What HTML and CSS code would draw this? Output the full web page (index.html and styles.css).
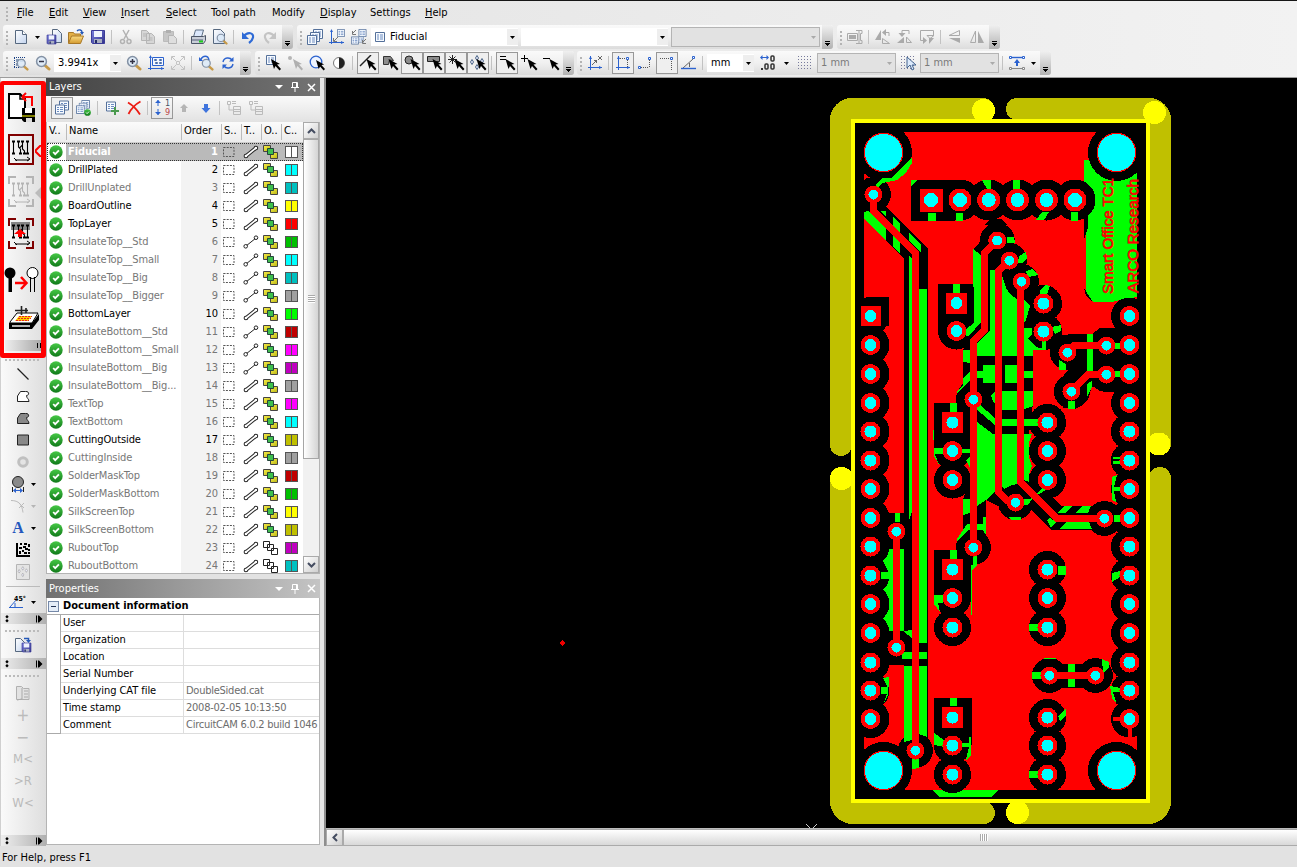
FILE: index.html
```html
<!DOCTYPE html>
<html lang="en">
<head>
<meta charset="utf-8">
<title>CircuitCAM</title>
<link rel="stylesheet" href="styles.css">
</head>
<body>
<svg class="defs" width="0" height="0">
  <defs>
    <linearGradient id="gPage" x1="0" y1="0" x2="1" y2="1"><stop offset="0" stop-color="#fff"/><stop offset="1" stop-color="#c3d4ee"/></linearGradient>
    <linearGradient id="gGreen" x1="0" y1="0" x2="0" y2="1"><stop offset="0" stop-color="#45c845"/><stop offset="1" stop-color="#117a1a"/></linearGradient>
    <linearGradient id="gYel" x1="0" y1="0" x2="1" y2="1"><stop offset="0" stop-color="#fbf14a"/><stop offset="1" stop-color="#b8b414"/></linearGradient>
    <linearGradient id="gFold" x1="0" y1="0" x2="0" y2="1"><stop offset="0" stop-color="#fbdc84"/><stop offset="1" stop-color="#d39a2e"/></linearGradient>
    <linearGradient id="gFlop" x1="0" y1="0" x2="1" y2="1"><stop offset="0" stop-color="#7a80e0"/><stop offset="1" stop-color="#30308a"/></linearGradient>
  </defs>
  <symbol id="arrow" viewBox="0 0 5 3"><path d="M0 0h5L2.5 3z" fill="currentColor"/></symbol>
  <symbol id="new" viewBox="0 0 16 16"><path d="M2.5 1.5h7l4 4v9h-11z" fill="url(#gPage)" stroke="#56687f"/><path d="M9.5 1.5v4h4" fill="#fff" stroke="#56687f"/></symbol>
  <symbol id="flop" viewBox="0 0 16 16"><path d="M1.5 1.5h13v13h-12l-1-1z" fill="url(#gFlop)" stroke="#3a3a96"/><path d="M4 2h8v6H4z" fill="#eef2fc"/><path d="M4 10h8v4H4z" fill="#a9afc0"/><path d="M5 11h2v3H5z" fill="#222a66"/></symbol>
  <symbol id="savecopy" viewBox="0 0 16 16"><path d="M6.500 .5h5l4 4v9h-9z" fill="url(#gPage)" stroke="#56687f"/><svg x="0" y="5" width="11" height="11"><use href="#flop" width="11" height="11"/></svg></symbol>
  <symbol id="export" viewBox="0 0 18 18"><path d="M1.500 2.500h5l4 4v9h-9z" fill="url(#gPage)" stroke="#56687f"/><svg x="7" y="6" width="11" height="11"><use href="#flop" width="11" height="11"/></svg><path d="M10 2.500h4.500V5" fill="none" stroke="#2458b8" stroke-width="1.500"/><path d="M12 4h5l-2.500 3z" fill="#2458b8"/></symbol>
  <symbol id="open" viewBox="0 0 16 16"><path d="M.5 14V3.500h5l1 1.500h6v3" fill="#e3b048" stroke="#a87828"/><path d="M.5 14.500l3-7.500h12l-3 7.500z" fill="url(#gFold)" stroke="#a87828"/><path d="M9 2c2-2 5-1 5 1" fill="none" stroke="#2458b8" stroke-width="1.400"/><path d="M12 3h4l-2 3z" fill="#2458b8"/></symbol>
  <symbol id="cut" viewBox="0 0 16 16"><path d="M5 1l5 9M11 1L6 10" stroke="#b2b2b2" stroke-width="1.500"/><circle cx="4.500" cy="12.500" r="2" fill="none" stroke="#b2b2b2" stroke-width="1.500"/><circle cx="11" cy="12.500" r="2" fill="none" stroke="#b2b2b2" stroke-width="1.500"/></symbol>
  <symbol id="copy" viewBox="0 0 16 16"><path d="M1.500 1.500h5l3 3v7h-8zM6.500 4.500h5l3 3v7h-8z" fill="#d6d6d6" stroke="#b5b5b5"/><path d="M3 5h3M3 7h3M8.500 9h4M8.500 11h4" stroke="#b5b5b5"/></symbol>
  <symbol id="paste" viewBox="0 0 16 16"><path d="M1.500 2.500h10v10h-10z" fill="#c6c6c6" stroke="#bbb"/><path d="M4 1h5v3H4z" fill="#afafaf"/><path d="M6.500 6.500h5l3 3v5h-8z" fill="#dedede" stroke="#b5b5b5"/></symbol>
  <symbol id="print" viewBox="0 0 16 16"><path d="M5.500 1h8l-2 7h-8z" fill="#dce8fc" stroke="#5f7086"/><path d="M1.500 7.500h12l2-1v5l-2 3h-12z" fill="#c9ced8" stroke="#4d5668"/><path d="M2 11h11" stroke="#56607a"/><path d="M9 11.500h4v2H9z" fill="#1bd11b"/></symbol>
  <symbol id="lens" viewBox="0 0 16 16"><path d="M9.500 10l4.500 4" stroke="#c79a48" stroke-width="3" stroke-linecap="round"/><circle cx="6.500" cy="6.500" r="4.900" fill="#dceaf8" fill-opacity=".85" stroke="#8391a4" stroke-width="1.500"/></symbol>
  <symbol id="preview" viewBox="0 0 16 16"><path d="M1.500 .5h7l4 4v10h-11z" fill="url(#gPage)" stroke="#56687f"/><svg x="4" y="4" width="12" height="12"><use href="#lens" width="12" height="12"/></svg></symbol>
  <symbol id="undo" viewBox="0 0 16 16"><path d="M3.500 7.500C8 2 14 4 13 8.500 12.500 11 11 12.500 9 14" fill="none" stroke="currentColor" stroke-width="2.200"/><path d="M2 3v7h7z" fill="currentColor"/></symbol>
  <symbol id="zsel" viewBox="0 0 16 16"><path d="M1 2.500h12M1 12.500h6M1.500 3v10" stroke="#183f85" stroke-dasharray="1 1"/><path d="M3 4h3v3H3zM7 4h4v3H7zM3 8h3v3H3z" fill="#8299b8"/><svg x="3" y="3" width="13" height="13"><use href="#lens" width="13" height="13"/></svg></symbol>
  <symbol id="zout" viewBox="0 0 16 16"><use href="#lens"/><path d="M4 6.500h5" stroke="#334" stroke-width="1.500"/></symbol>
  <symbol id="zin" viewBox="0 0 16 16"><use href="#lens"/><path d="M4 6.500h5M6.500 4v5" stroke="#334" stroke-width="1.500"/></symbol>
  <symbol id="zfit" viewBox="0 0 16 16"><path d="M2.500 1v14M0 13.500h16" stroke="#2b62cf"/><path d="M1 3l1.500-3L4 3zM13 12l3 1.500-3 1.500z" fill="#2b62cf"/><path d="M4.500 2.500h11v8h-11z" fill="#f4f8ff" stroke="#2b62cf"/><path d="M6.500 4.500h2v1h-2zM11.500 4.500h2v1h-2zM7.500 7.500h2v1h-2zM11.500 7.500h2v1h-2z" fill="none" stroke="#4a6eaa"/></symbol>
  <symbol id="zall" viewBox="0 0 16 16"><path d="M1.500 5v-3.500H5M11 1.500h3.500V5M14.500 11v3.500H11M5 14.500H1.500V11M2 2l4 4M14 2l-4 4M14 14l-4-4M2 14l4-4" fill="none" stroke="#c2c2c2"/><path d="M6.500 6.500h3v3h-3z" fill="none" stroke="#c4c4c4"/></symbol>
  <symbol id="zprev" viewBox="0 0 16 16"><svg x="3" y="3" width="13" height="13"><use href="#lens" width="13" height="13"/></svg><path d="M2.500 5C5 0 10 0 11 5" fill="none" stroke="#2b62cf" stroke-width="1.400"/><path d="M1 2v4h4z" fill="#2b62cf"/></symbol>
  <symbol id="refresh" viewBox="0 0 16 16"><path d="M3 7c1-5 7-5 9-2M13 9c-1 5-7 5-9 2" fill="none" stroke="#2b62cf" stroke-width="1.400"/><path d="M13.500 2v4.500H9zM2.500 14V9.500H7z" fill="#2b62cf"/></symbol>
  <symbol id="grid" viewBox="0 0 10 10"><path d="M.5 .5h9v9h-9z" fill="#f6faff" stroke="#54709a"/><path d="M2 3h2M5 3h3M2 5h2M5 5h3M2 7h2M5 7h3" stroke="#6c8cc0"/></symbol>
  <symbol id="layers" viewBox="0 0 16 16"><use href="#grid" x="6" y="0" width="10" height="10"/><use href="#grid" x="3" y="3" width="10" height="10"/><use href="#grid" x="0" y="6" width="10" height="10"/></symbol>
  <symbol id="lay2" viewBox="0 0 16 16"><path d="M2.500 1v14M0 13.500h15" stroke="#2b62cf"/><path d="M1 3l1.500-3L4 3zM12 12l3 1.500-3 1.500z" fill="#2b62cf"/><use href="#grid" x="8" y="0" width="8" height="8"/><path d="M9 8l-4 4M4.500 9v3.500H8" stroke="#777" fill="none"/></symbol>
  <symbol id="lay3" viewBox="0 0 16 16"><use href="#grid" x="7" y="0" width="9" height="8"/><use href="#grid" x="0" y="7" width="8" height="9"/><use href="#grid" x="7" y="7" width="6" height="7"/><path d="M5 1L1 5M1.500 2v3.500H5M15 10l-4 4M11.500 11v3.500H15" stroke="#777" fill="none"/></symbol>
  <symbol id="cursor" viewBox="0 0 10 12"><path d="M0 0l9 5-3 .5L10 10 8.500 11.500 4.500 7 3 10z" fill="currentColor"/></symbol>
  <symbol id="sgrid" viewBox="0 0 16 16"><use href="#grid" x="1" y="0" width="10" height="10"/><use href="#cursor" x="6" y="4" width="10" height="12"/></symbol>
  <symbol id="spt" viewBox="0 0 16 16"><circle cx="3" cy="3" r="2" fill="#b5b5b5"/><use href="#cursor" x="6" y="4" width="10" height="12"/></symbol>
  <symbol id="scirc" viewBox="0 0 16 16"><circle cx="7" cy="7" r="5.800" fill="#eef4ff" stroke="#2b62cf" stroke-width="1.300"/><use href="#cursor" x="7" y="5" width="9" height="11"/></symbol>
  <symbol id="contrast" viewBox="0 0 16 16"><circle cx="8" cy="8" r="5.500" fill="#fff" stroke="#777"/><path d="M8 2.500a5.500 5.500 0 0 1 0 11z" fill="#222"/></symbol>
  <symbol id="sline" viewBox="0 0 18 16"><path d="M1 11L12 0" stroke="#222" stroke-width="1.400"/><use href="#cursor" x="7" y="4" width="11" height="12"/></symbol>
  <symbol id="spoly" viewBox="0 0 18 16"><path d="M2.500 9.500v-8h7l3 4-4-.5-1 4.500z" fill="#8c8c8c" stroke="#333"/><use href="#cursor" x="7" y="4" width="11" height="12"/></symbol>
  <symbol id="sdot" viewBox="0 0 18 16"><circle cx="6" cy="5" r="4" fill="#8c8c8c" stroke="#222"/><use href="#cursor" x="7" y="4" width="11" height="12"/></symbol>
  <symbol id="srect" viewBox="0 0 18 16"><path d="M2.500 1.500h12v5h-12z" fill="#8c8c8c" stroke="#222"/><use href="#cursor" x="7" y="4" width="11" height="12"/></symbol>
  <symbol id="sstar" viewBox="0 0 18 16"><path d="M5.500 0v9M1 4.500h9M2.500 1.500l6 6M8.500 1.500l-6 6" stroke="#222"/><use href="#cursor" x="7" y="4" width="11" height="12"/></symbol>
  <symbol id="diam" viewBox="0 0 18 16"><path d="M8 .5L9.500 3 8 5.500 6.500 3zM3 4.500L4.500 7 3 9.500 1.500 7zM8 9.500l1.500 2.500L8 14.500 6.500 12zM13 3.500L14.500 6 13 8.500 11.500 6z" fill="#eef" stroke="currentColor"/></symbol>
  <symbol id="sdiam" viewBox="0 0 18 16"><use href="#diam" color="#4a6486"/><use href="#cursor" x="7" y="4" width="11" height="12"/></symbol>
  <symbol id="seq" viewBox="0 0 18 16"><path d="M2 1.500h6M2 4.500h6" stroke="#000"/><use href="#cursor" x="7" y="4" width="11" height="12"/></symbol>
  <symbol id="splus" viewBox="0 0 18 16"><path d="M1 3.500h7M4.500 0v7" stroke="#000"/><use href="#cursor" x="7" y="4" width="11" height="12"/></symbol>
  <symbol id="sminus" viewBox="0 0 18 16"><path d="M1 3.500h7" stroke="#000"/><use href="#cursor" x="7" y="4" width="11" height="12"/></symbol>
  <symbol id="axes" viewBox="0 0 16 16"><path d="M3.500 1v14M1 12.500h14" stroke="#2b62cf"/><path d="M2 4l1.500-3L5 4zM12 11l3 1.500-3 1.500z" fill="#2b62cf"/></symbol>
  <symbol id="ax1" viewBox="0 0 16 16"><use href="#axes"/><path d="M5 10l5-5M7 5.500h2.500V8M11 1l4 4M15 1l-4 4" stroke="#666" fill="none"/></symbol>
  <symbol id="ax2" viewBox="0 0 16 16"><use href="#axes"/><path d="M5 3.500h7M12.500 5v7" stroke="#555" stroke-dasharray="1 1"/><path d="M11.500 2.500h2v2h-2z" fill="#fff" stroke="#2b62cf"/></symbol>
  <symbol id="ax3" viewBox="0 0 16 16"><path d="M4 12.500h8M12.500 5v7" stroke="#555" stroke-dasharray="1 1"/><path d="M1.500 11.500h2v2h-2zM11.500 2.500h2v2h-2z" fill="#fff" stroke="#2b62cf"/></symbol>
  <symbol id="ax4" viewBox="0 0 16 16"><path d="M1 3.500h10M12.500 6v9" stroke="#555" stroke-dasharray="1 1"/><path d="M11.500 2.500h2v2h-2z" fill="#fff" stroke="#2b62cf"/></symbol>
  <symbol id="ax5" viewBox="0 0 16 16"><path d="M2 13L12 4M8.500 8v4" stroke="#666"/><path d="M0 13.500h15" stroke="#2b62cf" stroke-width="1.400"/><path d="M11.500 1.500h2v2h-2z" fill="#fff" stroke="#2b62cf"/></symbol>
  <symbol id="prec" viewBox="0 0 16 16"><path d="M1 2.500h7" stroke="#2b62cf"/><path d="M0 2.500L2.500 0v5zM9 2.500L6.500 0v5z" fill="#2b62cf"/><rect x="11" y="1" width="3" height="5" rx="1" fill="none" stroke="#333" stroke-width="1.500"/><rect x="5" y="9" width="3" height="5" rx="1" fill="none" stroke="#333" stroke-width="1.500"/><rect x="11" y="9" width="3" height="5" rx="1" fill="none" stroke="#333" stroke-width="1.500"/><path d="M1 13h2v2H1z" fill="#333"/></symbol>
  <symbol id="dots" viewBox="0 0 16 16"><path d="M1 1.500h14M1 4.500h14M1 7.500h14M1 10.500h14M1 13.500h14" stroke="#777a9b" stroke-dasharray="1 2"/></symbol>
  <symbol id="dotc" viewBox="0 0 16 16"><use href="#dots"/><path d="M7 2v11l3-3 2 5 2-1-2-4h4z" fill="#dceafc" stroke="#45658f"/></symbol>
  <symbol id="dist" viewBox="0 0 16 16"><path d="M3 2.500h10" stroke="#2b62cf" stroke-width="1.400"/><path d="M.5 1.500h2v2h-2zM13.500 1.500h2v2h-2z" fill="#fff" stroke="#2b62cf"/><path d="M8 4l3 4H9v3H7V8H5z" fill="#2b62cf"/><path d="M3 13.500h10" stroke="#888"/><path d="M.5 12.500h2v2h-2zM13.500 12.500h2v2h-2z" fill="#fff" stroke="#888"/></symbol>
  <symbol id="mir1" viewBox="0 0 18 16"><path d="M1.500 4.500h10v7h-10z" fill="none" stroke="#aaa"/><path d="M3 6h7v4H3z" fill="#aaa"/><path d="M10 1.500h6v3h-1.500v7H16v3h-6M13 1v14" fill="none" stroke="#aaa"/></symbol>
  <symbol id="mir2" viewBox="0 0 16 16"><path d="M6 1v10H0z" fill="#aaa"/><path d="M7.500 9.500l7 5h-7zM14 7V3.500H9" fill="none" stroke="#aaa"/><path d="M11 0v7L7 3.500z" fill="#aaa"/></symbol>
  <symbol id="mir3" viewBox="0 0 16 16"><path d="M0 14h7V8z" fill="#aaa"/><path d="M9.500 8v5.500h5zM12 5V1.500H5V5" fill="none" stroke="#aaa"/><path d="M1.500 4h7L5 8z" fill="#aaa"/></symbol>
  <symbol id="mir4" viewBox="0 0 16 16"><path d="M14.500 6V1.500h-13v10H5" fill="none" stroke="#aaa"/><path d="M4 8v7l4-3.500zM10 15V9h5z" fill="#aaa"/><path d="M8 6.500h7l-4 3z" fill="none" stroke="#aaa"/></symbol>
  <symbol id="mir5" viewBox="0 0 16 16"><path d="M2 6.500L12.500 1.500v5z" fill="none" stroke="#aaa"/><path d="M2 9h11v5z" fill="#aaa"/></symbol>
  <symbol id="mir6" viewBox="0 0 16 16"><path d="M6.500 2v11.500h-5z" fill="none" stroke="#aaa"/><path d="M9 2v12h6z" fill="#aaa"/></symbol>
  <symbol id="lp1" viewBox="0 0 16 16"><use href="#grid" x="5" y="0" width="10" height="11"/><use href="#grid" x="1" y="4" width="10" height="11"/></symbol>
  <symbol id="tick" viewBox="0 0 14 14"><circle cx="7" cy="7" r="6.700" fill="url(#gGreen)"/><path d="M4.200 7l2 2.200L9.900 5.300" stroke="#fff" stroke-width="1.800" fill="none"/></symbol>
  <symbol id="lp2" viewBox="0 0 16 16"><use href="#layers" width="14" height="14"/><use href="#tick" x="8" y="9" width="7" height="7"/></symbol>
  <symbol id="lp3" viewBox="0 0 16 16"><use href="#grid" x="2" y="1" width="10" height="11"/><path d="M7 11h8M11 7v8" stroke="#4a9a4e" stroke-width="2"/></symbol>
  <symbol id="del" viewBox="0 0 16 16"><path d="M2 2.500c5 3 9 7 12 12M14.500 1.500C8 5 5 9 2.500 14" stroke="#ec1c14" stroke-width="1.800" fill="none"/></symbol>
  <symbol id="up" viewBox="0 0 16 16"><path d="M8 4l4 4H10v4H6V8H4z" fill="currentColor"/></symbol>
  <symbol id="down" viewBox="0 0 16 16"><path d="M8 13l4.500-5H10V4H6v4H3.500z" fill="#3f74dd"/></symbol>
  <symbol id="tree" viewBox="0 0 16 16"><path d="M1.500 1.500h3v3h-3zM6 1.500h4M6 3.500h4M3 5v5h4M7.500 6.500h7v8h-7zM8 9.500h6M8 11.500h6" fill="none" stroke="#bbb"/></symbol>
  <symbol id="dash" viewBox="0 0 12 10"><path d="M.5 .5h10.500v9H.5z" fill="none" stroke="#555" stroke-dasharray="2 1.200"/></symbol>
  <symbol id="bone1" viewBox="0 0 16 14"><path d="M3 11L13 3" stroke="#222"/><circle cx="2.700" cy="11.300" r="1.800" fill="#fff" stroke="#222"/><circle cx="13" cy="2.700" r="1.800" fill="#fff" stroke="#222"/></symbol>
  <symbol id="bone2" viewBox="0 0 16 14"><circle cx="2.900" cy="11" r="2.300" fill="#222"/><circle cx="12.900" cy="3" r="2.300" fill="#222"/><path d="M3 11L13 3" stroke="#222" stroke-width="3.600"/><path d="M3 11L13 3" stroke="#fff" stroke-width="1.700"/><circle cx="2.900" cy="11" r="1.300" fill="#fff"/><circle cx="12.900" cy="3" r="1.300" fill="#fff"/></symbol>
  <symbol id="lay" viewBox="0 0 15 14"><path d="M.5 .5h7v6h-7z" fill="url(#gYel)" stroke="#444"/><path d="M7.500 7.500h7v6h-7z" fill="url(#gYel)" stroke="#444"/><path d="M4.500 3.500h6v6h-6z" fill="#3ec04d" stroke="#24443a"/></symbol>
  <symbol id="layo" viewBox="0 0 15 14"><path d="M.5 .5h6v6h-6zM8.500 7.500h6v6h-6zM4.500 3.500h6v6h-6z" fill="#fff" fill-opacity=".6" stroke="#222"/></symbol>
  <symbol id="pin" viewBox="0 0 8 10"><path d="M1.500 .5h5v5h-5zM5.500 .5v5M0 5.500h8M4 6v4" fill="none" stroke="#fff"/></symbol>
  <symbol id="x" viewBox="0 0 9 9"><path d="M1 1l7 7M8 1L1 8" stroke="#fff" stroke-width="1.500"/></symbol>

  <symbol id="bnew" viewBox="0 0 30 32"><path d="M2 2h11l5 5v19H2z" fill="#fff" stroke="#000" stroke-width="2"/><path d="M13 2v5h5" fill="none" stroke="#000" stroke-width="1.500"/><path d="M15 5h10v9M15 5l4-4M15 5l4 4" fill="none" stroke="#f00" stroke-width="2"/><path d="M15 16h13v14H17l-2-2z" fill="#000"/><path d="M18 16h7v5h-7z" fill="#fff"/><path d="M15 23h13v2H15z" fill="#808000"/><path d="M19 26h6v4h-6z" fill="#ddd"/></symbol>
  <symbol id="tracks" viewBox="0 0 26 31"><path d="M5.500 7v13M10.500 7v6l2 2v5M14.500 7v4l-3 3M14.500 11v4l2 2v3M19.500 7v13M7 26h14" fill="none" stroke="currentColor" stroke-width="1.100"/><path d="M4 7.500h3M9 7.500h3M13 7.500h3M18 7.500h3M4 19.500h3M11 19.500h3M15 19.500h3M18 19.500h3" stroke="currentColor" stroke-width="2"/><path d="M6 24l3 3M19 23l3 2-3 2" stroke="currentColor" fill="none"/></symbol>
  <symbol id="b2" viewBox="0 0 26 31"><path d="M1 1h24v29H1z" fill="none" stroke="#800000" stroke-width="2"/><use href="#tracks"/></symbol>
  <symbol id="b3" viewBox="0 0 26 31"><path d="M1 8V1h7M18 1h7v7M25 23v7h-7M8 30H1v-7" fill="none" stroke="#b4b4b4" stroke-width="2"/><use href="#tracks" color="#b4b4b4"/></symbol>
  <symbol id="b4" viewBox="0 0 26 31"><path d="M3 4h19v8H3z" fill="#858585"/><path d="M1 8V1h7M18 1h7v7M25 23v7h-7M8 30H1v-7" fill="none" stroke="#800000" stroke-width="2"/><use href="#tracks"/><path d="M12 11l6 5h-4v3h-4v-3H6z" fill="#f00"/></symbol>
  <symbol id="b5" viewBox="0 0 36 30"><circle cx="6" cy="7" r="5.500"/><path d="M4.500 10h3.500v16H4.500z"/><circle cx="28.500" cy="7" r="5.500" fill="#fff" stroke="#000"/><path d="M26.500 11v15M30.500 11v15" stroke="#000"/><path d="M11 17h10M17 11l5.500 6-5.500 6" stroke="#f00" stroke-width="2.500" fill="none"/></symbol>
  <symbol id="b6" viewBox="0 0 32 26"><path d="M2 17l7-9h21l-6 10H2z" fill="#fff" stroke="#000"/><path d="M11 11h13l-4 5H7z" fill="#fc0"/><path d="M11 11.500h13M10 13.500h13M8 15.500h13" stroke="#e22" stroke-dasharray="2 1"/><path d="M1 18h23l7-9v6l-7 9H1z"/><path d="M4 21h18" stroke="#eee" stroke-width="1.500"/><path d="M7 5.500h13M13.500 1v9M18 3v5" stroke="#222" stroke-width="1.600"/></symbol>
  <symbol id="v1" viewBox="0 0 16 16"><path d="M2.500 2.500l11 11" stroke="#222" stroke-width="1.300"/></symbol>
  <symbol id="v2" viewBox="0 0 16 16"><path d="M2.500 13.500V8l3-4.500h5c4-.5 4 4 1 4 0 3 2.500 3 2.500 6z" fill="currentColor" stroke="#222"/></symbol>
  <symbol id="v4" viewBox="0 0 16 16"><path d="M2.500 3h11v10h-11z" fill="#888" stroke="#222"/></symbol>
  <symbol id="v5" viewBox="0 0 16 16"><circle cx="8" cy="8" r="4.300" fill="#e4e4e4" stroke="#c0c0c0" stroke-width="3"/></symbol>
  <symbol id="v6" viewBox="0 0 16 18"><circle cx="8" cy="7" r="5.500" fill="#8a8a8a" stroke="#222"/><path d="M2.500 12v5M13.500 12v5" stroke="#222"/><path d="M4 15.500h8" stroke="#2b62cf"/><path d="M6 13v5l-3-2.500zM10 13v5l3-2.500z" fill="#2b62cf"/></symbol>
  <symbol id="v7" viewBox="0 0 16 16"><path d="M1 2.500c8 0 11 4 12 12M9 5l5 5M14 5L9 10" fill="none" stroke="#bbb"/></symbol>
  <symbol id="v9" viewBox="0 0 14 14"><path d="M0 0h2v12h12v2H0zM4 0h2v2H4zM8 0h3v2H8zM12 1h2v3h-2zM3 4h3v2H3zM7 3h3v2H7zM9 5h3v2H9zM12 6h2v2h-2zM3 8h2v3H3zM6 7h2v2H6zM8 9h3v2H8zM12 9h2v2h-2z"/></symbol>
  <symbol id="v10" viewBox="0 0 16 16"><path d="M1.500 .5h13v15h-13z" fill="#e4e4e4" stroke="#b5b5b5"/><use href="#diam" x="2" y="2" width="13" height="12" color="#aaa"/></symbol>
  <symbol id="v12" viewBox="0 0 16 16"><path d="M1.500 1.500h5l2 2h5.500v11h-12.500z" fill="#e2e2e2" stroke="#b0b0b0"/><path d="M7 3v11l-5 1M9 6h4M9 9h4M9 12h4" fill="none" stroke="#aaa"/></symbol>
  <symbol id="bar" viewBox="0 0 45 10"><path d="M5 2h2v1H5zM4 3h4L6 5zM5 6h2v1H5zM4 7h4L6 9z"/><path d="M35 2h1v7h-1zM37 2h1v7h-1zM38 2l3.500 3.500L38 9z"/></symbol>
</svg>

<div class="app">
  <nav class="menu">
    <i class="grip"></i>
    <span class="m1"><u>F</u>ile</span><span class="m2"><u>E</u>dit</span><span class="m3"><u>V</u>iew</span><span class="m4"><u>I</u>nsert</span><span class="m5"><u>S</u>elect</span><span class="m6">Tool path</span><span class="m7">Modify</span><span class="m8"><u>D</u>isplay</span><span class="m9">Settings</span><span class="m10"><u>H</u>elp</span>
  </nav>

  <div class="row row1">
    <div class="group">
      <i class="grip"></i><b class="btn" data-i="new"></b><b class="arr"></b><b class="btn" data-i="savecopy"></b><b class="btn" data-i="open"></b><b class="btn" data-i="flop"></b><i class="sep"></i><b class="btn" data-i="cut"></b><b class="btn" data-i="copy"></b><b class="btn" data-i="paste"></b><i class="sep"></i><b class="btn" data-i="print"></b><b class="btn" data-i="preview"></b><i class="sep"></i><b class="btn blue" data-i="undo"></b><b class="btn flip" data-i="undo"></b><i class="more"></i>
    </div>
    <div class="group g2">
      <i class="grip"></i><b class="btn" data-i="layers"></b><b class="btn" data-i="lay2"></b><b class="btn" data-i="lay3"></b>
      <div class="combo c147 first"><svg class="ci" width="10" height="10"><use href="#grid"/></svg>Fiducial<b class="arr"></b></div>
      <div class="combo c147"><b class="arr"></b></div>
      <div class="combo c149 off"><b class="arr"></b></div><i class="more"></i>
    </div>
    <div class="group g3">
      <i class="grip"></i><b class="btn" data-i="mir1"></b><i class="sep"></i><b class="btn" data-i="mir2"></b><b class="btn" data-i="mir3"></b><b class="btn" data-i="mir4"></b><i class="sep"></i><b class="btn" data-i="mir5"></b><b class="btn" data-i="mir6"></b><i class="more"></i>
    </div>
  </div>

  <div class="row row2">
    <div class="group">
      <i class="grip"></i><b class="btn" data-i="zsel"></b><b class="btn" data-i="zout"></b>
      <div class="combo c68">3.9941x<b class="arr"></b></div>
      <b class="btn" data-i="zin"></b><b class="btn" data-i="zfit"></b><b class="btn" data-i="zall"></b><i class="sep"></i><b class="btn" data-i="zprev"></b><b class="btn" data-i="refresh"></b><i class="more"></i>
    </div>
    <div class="group g2b">
      <i class="grip"></i><b class="btn" data-i="sgrid"></b><b class="btn gray" data-i="spt"></b><b class="btn" data-i="scirc"></b><b class="btn" data-i="contrast"></b><i class="sep"></i><b class="btn on" data-i="sline"></b><b class="btn" data-i="spoly"></b><b class="btn on" data-i="sdot"></b><b class="btn on" data-i="srect"></b><b class="btn on" data-i="sstar"></b><b class="btn on" data-i="sdiam"></b><i class="sep"></i><b class="btn on" data-i="seq"></b><b class="btn" data-i="splus"></b><b class="btn" data-i="sminus"></b><i class="more"></i>
    </div>
    <div class="group g3b">
      <i class="grip"></i><b class="btn" data-i="ax1"></b><i class="sep"></i><b class="btn on" data-i="ax2"></b><b class="btn" data-i="ax3"></b><b class="btn on" data-i="ax4"></b><b class="btn" data-i="ax5"></b><i class="sep"></i>
      <div class="combo c47">mm<b class="arr"></b></div>
      <b class="btn" data-i="prec"></b><b class="arr w16"></b><b class="btn" data-i="dots"></b>
      <div class="combo c79 off">1 mm<b class="arr"></b></div>
      <b class="btn" data-i="dotc"></b>
      <div class="combo c79 off">1 mm<b class="arr"></b></div>
      <i class="sep"></i><b class="btn" data-i="dist"></b><b class="arr"></b><i class="more"></i>
    </div>
  </div>

  <div class="main">
    <aside class="strip">
      <div class="hot">
        <svg class="i1" width="30" height="32"><use href="#bnew"/></svg>
        <svg class="i2" width="26" height="31"><use href="#b2"/></svg>
        <svg class="i3" width="26" height="31"><use href="#b3"/></svg>
        <svg class="i4" width="26" height="31"><use href="#b4"/></svg>
        <svg class="i5" width="36" height="30"><use href="#b5"/></svg>
        <svg class="i6" width="32" height="26"><use href="#b6"/></svg>
        <div class="hotbar"><i></i></div>
        <svg class="notch n1" width="6" height="12"><path d="M6 0L0 6l6 6" fill="none" stroke="red" stroke-width="2"/></svg>
        <svg class="notch n2" width="6" height="12"><path d="M6 0L0 6l6 6z" fill="#bbb"/></svg>
      </div>
      <i class="hgrip"></i>
      <div class="tools">
        <b class="tb" data-i="v1"></b><b class="tb white" data-i="v2"></b><b class="tb mid" data-i="v2"></b><b class="tb" data-i="v4"></b><b class="tb" data-i="v5"></b>
        <div class="duo"><b class="tb" data-i="v6"></b><b class="arr"></b></div>
        <div class="duo off"><b class="tb" data-i="v7"></b><b class="arr"></b></div>
        <div class="duo"><b class="tb letter">A</b><b class="arr"></b></div>
        <b class="tb" data-i="v9"></b><b class="tb" data-i="v10"></b>
        <i class="hsep"></i>
        <div class="duo"><svg class="ang" width="18" height="16"><path d="M1 13L8 5M6 9v4" stroke="#2b62cf"/><path d="M0 13.500h14" stroke="#2b62cf"/><text x="5" y="7" font-size="7">45°</text></svg><b class="arr"></b></div>
      </div>
      <svg class="endbar" width="45" height="11"><use href="#bar"/></svg>
      <i class="hgrip"></i>
      <b class="tb one" data-i="export"></b>
      <svg class="endbar" width="45" height="11"><use href="#bar"/></svg>
      <i class="hgrip"></i>
      <div class="tools dim">
        <b class="tb" data-i="v12"></b><b class="tb sym">+</b><b class="tb sym">−</b><b class="tb txt">M&lt;</b><b class="tb txt">&gt;R</b><b class="tb txt">W&lt;</b>
      </div>
      <svg class="endbar last" width="45" height="11"><use href="#bar"/></svg>
    </aside>

    <section class="panels">
      <header class="cap dark"><span>Layers</span><svg class="k" width="8" height="4"><path d="M0 0h8L4 4z" fill="#fff"/></svg><svg class="k" width="8" height="10"><use href="#pin"/></svg><svg class="k" width="9" height="9"><use href="#x"/></svg></header>
      <div class="ltools">
        <b class="btn on" data-i="lp1"></b><b class="btn" data-i="lp2"></b><i class="sep"></i><b class="btn" data-i="lp3"></b><b class="btn" data-i="del"></b><i class="sep"></i>
        <div class="sort"><svg width="6" height="16"><path d="M3 0v6M3 9v6" stroke="#2b62cf"/><path d="M0 3l3-3 3 3zM0 12l3 3 3-3z" fill="#2b62cf"/></svg><span><em>1</em><em class="r">9</em></span></div>
        <b class="btn pale" data-i="up"></b><b class="btn" data-i="down"></b><i class="sep"></i><b class="btn" data-i="tree"></b><b class="btn" data-i="tree"></b>
      </div>
      <div class="listwrap">
        <div class="list">
          <div class="lrow lhead"><span>V..</span><span>Name</span><span>Order</span><span>S..</span><span>T..</span><span>O..</span><span>C..</span></div>
          <div class="lbody" id="rows"></div>
        </div>
        <div class="vscroll">
          <div class="sb"><svg width="9" height="6"><path d="M1 5l3.500-3.500L8 5" fill="none" stroke="#444c60" stroke-width="2"/></svg></div>
          <div class="thumb"><i></i></div>
          <div class="sb end"><svg width="9" height="6"><path d="M1 1l3.500 3.500L8 1" fill="none" stroke="#444c60" stroke-width="2"/></svg></div>
        </div>
      </div>
      <header class="cap light"><span>Properties</span><svg class="k" width="8" height="4"><path d="M0 0h8L4 4z" fill="#fff"/></svg><svg class="k" width="8" height="10"><use href="#pin"/></svg><svg class="k" width="9" height="9"><use href="#x"/></svg></header>
      <div class="props">
        <div class="ptitle"><i class="minus"></i>Document information</div>
        <dl class="ptable">
          <dt>User</dt><dd></dd>
          <dt>Organization</dt><dd></dd>
          <dt>Location</dt><dd></dd>
          <dt>Serial Number</dt><dd></dd>
          <dt>Underlying CAT file</dt><dd>DoubleSided.cat</dd>
          <dt>Time stamp</dt><dd>2008-02-05 10:13:50</dd>
          <dt>Comment</dt><dd>CircuitCAM 6.0.2 build 1046</dd>
        </dl>
      </div>
    </section>

    <section class="view">
      <svg class="pcb" width="971" height="750" viewBox="326 78 971 750" shape-rendering="crispEdges">
        <g fill="none" stroke="#c0c000" stroke-width="22" stroke-linecap="round">
          <path d="M983 109H852A11 11 0 0 0 841 120V445"/>
          <path d="M841 478V801A12 12 0 0 0 853 813H984"/>
          <path d="M1018 813H1148A12 12 0 0 0 1160 801V478"/>
          <path d="M1160 444V120A11 11 0 0 0 1149 109H1017"/>
        </g>
        <g fill="#ff0"><circle cx="983.500" cy="110.500" r="11.500"/><circle cx="1154.500" cy="112.500" r="11.500"/><circle cx="1159" cy="444" r="11.500"/><circle cx="841.500" cy="478.500" r="11.500"/><circle cx="1017.500" cy="812.500" r="11.500"/></g>
        <path d="M853 121H1148V801H853z" fill="#000"/>
        <path d="M864 132H1137V790H864z" fill="red"/>
        <g fill="#0f0">
          <path d="M1084 160H1137V297L1125 299 1112 302H1093L1086 293V230L1084 225z"/>
          <path d="M880 549H912V665H880z"/>
          <path d="M933 790H998L991 797H939z"/>
        </g>
        <g>
          <path d="M911 180H955V221H911zM870 297H889V326H870zM938 284H974V331H938zM934 403H971V451H934zM934 550H971V598H934zM934 698H972V745H934z"/>
          <path d="M973 250L985 236 1000 240 1038 290 1033 350V403L1029 434V482L1035 495 1013 512 1000 507 986 500V550L957 550V541L963 533V499L970 482V403H957V392L963 383V350L974 335z"/>
          <path d="M985 225l5-6 12 0 5 6zM889 513H905V549H889zM889 659H927V665H889z"/>
          <path d="M1084 288L1094 304 1086 296zM1084 216L1088 214V228L1084 240z"/>
          <g fill="none" stroke="#000" stroke-width="24">
            <path d="M873.500 194V210.700L915.500 253V750"/>
            <path d="M1020.500 482L1056 517.500H1104"/>
            <path d="M1067 352L1074 345.500H1106M1071 391L1088 374.500H1110"/>
            <path d="M1049 675.500H1096"/>
          </g>
          <path d="M1062 335L1092 334 1100 328H1118V392L1102 391 1092 386 1088 400 1075 409 1063 408 1060 380 1068 370 1060 368z"/>
          <g id="halos"></g>
        </g>
        <g fill="#0f0">
          <path d="M909 256L912 259V512L909 520zM919 289H927V643H919zM904 666H912V740L904 742zM919 666H927V737L919 734zM902 652H927V659H902zM903 631L912 630V638z"/>
          <path d="M864 212L868 211 886 228V240L864 219zM880 211H886V216zM893 217L900 223V254L893 246zM909 233L921 244V253L909 241z"/>
          <path d="M875 185L882 178H892L912 157V163L906 173 897 180 882 183 878 188z"/>
          <path d="M911 180H917L911 186zM928 213H936V221H928zM956 213H963V221H956zM982 180H991V189H987zM1013 180H1020V189H1013zM1042 212H1049L1044 220H1036zM1071 212H1078V221H1071z"/>
          <path d="M1007 237H1014L1015 243H1007zM1019 256L1026 252 1027 258 1022 263H1018zM1026 271L1033 269 1038 275 1028 277zM1040 291L1045 285 1050 286 1047 294H1040zM895 513H900V522H895z"/>
          <path d="M973 249L981 255V322L969 336H966V329L974 323zM990 270H995V356H977V343L990 330zM1002 275L1006 288 1011 295 1017 299V356H1002zM1024 299L1030 306 1026 320 1024 322V356H1033V350H1045V349L1036 347 1028 338 1032 334V328H1024z"/>
          <path d="M963 350H970V363L963 362zM983 365H995V383H983zM977 371H983V378H977zM1005 365H1017V383H1005zM1024 371H1033V378H1024zM970 371L963 378V385L957 392V394L970 380z"/>
          <path d="M991 395L995 391H1017V410H1002L993 402zM1024 391H1033V406L1024 409zM1002 419H1040V426H1002zM950 403H957V413H950zM953 284H960V293H953z"/>
          <path d="M977 422L993 434H995V491L986 500 977 506zM1002 434H1017V484L1012 485 1004 489 1002 487zM1024 434H1032L1029 442V458L1032 466 1029 474V482L1024 480z"/>
          <path d="M963 499H970V513L963 515zM983 517H986V535L983 530H969L957 541V539L963 530 967 524H983zM1008 517H1021V520H1011z"/>
          <path d="M979 404L995 418V425L976 409z"/>
          <path d="M950 550H957V560H950zM973 556H977V566L972 570V615H971V565H973zM934 448H943V454H934zM961 449H970V453H961zM934 420V440H933zM934 453L940 466 934 456zM966 460L970 456V468z"/>
          <path d="M934 595H943V603H938L940 612 934 604zM950 698H957V706H950zM934 733L944 740V747L934 745zM962 743H969V737H971V755L966 760 969 747H962zM912 759H919V768L912 769z"/>
          <path d="M1052 327L1061 325V331L1055 334zM1042 341H1046V350H1042zM1087 334H1093V371H1087zM1059 360L1066 364V370H1059zM1114 343H1122V349H1114zM1114 371H1122V377H1114zM1068 401H1075V409H1068zM1087 384L1092 381V387L1087 397z"/>
          <path d="M1022 499L1030 499 1046 490 1050 487 1046 484 1033 498 1028 505H1022zM1057 513L1065 506H1072L1065 513zM1076 513L1082 506H1091L1088 513zM1047 520L1050 518 1056 522 1051 528zM1066 522H1089L1092 529H1060z"/>
          <path d="M1114 515H1122V522H1114zM1058 566H1066V575H1058zM1029 624H1038V631H1029zM1032 672H1041V679H1032zM1068 664H1075V687H1068zM1044 658H1056V659H1044zM1102 659L1109 662V668L1103 673zM1058 716L1066 708V716L1060 721zM1029 771H1038V778H1029z"/>
          <path d="M1113 457H1120V459H1113zM1113 461H1120V464H1113zM1112 477L1117 475 1114 487H1120V491H1114L1116 502 1112 500zM1112 573L1120 571V577L1112 582zM1110 686L1120 688V692H1113L1117 704 1112 698z"/>
          <path d="M881 572H890V579H881zM884 563L889 558V573zM881 687H889V677L883 678 888 688V695L884 703 887 694H881z"/>
        </g>
        <g fill="none" stroke="red" stroke-width="7">
          <path d="M873.500 194V210.700L915.500 253V750M896.500 531V647"/>
          <path d="M997 240L984.500 253V330L973.500 341V547M1009 260L998.500 271V492L1010 503M1020.500 281V482L1057 518.500H1104"/>
          <path d="M1067 352L1074 345.500H1106M1071 391L1088 374.500H1106M1049 675.500H1096"/>
          <path d="M1113 719H1125M1130 725V740" stroke-width="4"/>
        </g>
        <g id="pads"></g>
        <path d="M853 121H1148V801H853z" fill="none" stroke="#ff0" stroke-width="4"/>
        <g fill="red" stroke="red" stroke-width=".7" font-family="Liberation Sans, sans-serif" font-size="15">
          <text transform="translate(1112.500 294) rotate(-90)" textLength="116" lengthAdjust="spacingAndGlyphs">Smart Office TC1</text>
          <text transform="translate(1137.500 293) rotate(-90)" textLength="114" lengthAdjust="spacingAndGlyphs">ARCO Research</text>
        </g>
        <path d="M562.500 640l3 3-3 3-3-3z" fill="#e00"/>
        <path d="M806 824l6 6M817 824l-6 6" stroke="#ccc"/>
      </svg>
      <div class="hscroll"><div class="sb"><svg width="6" height="9"><path d="M5 1L1.500 4.500 5 8" fill="none" stroke="#444c60" stroke-width="2"/></svg></div><div class="hthumb"><i></i></div></div>
    </section>
  </div>
  <footer class="status">For Help, press F1</footer>
</div>
<script src="app.js"></script>
</body>
</html>
```
FILE: styles.css
```css
* { box-sizing: border-box; }
html, body { margin: 0; height: 100%; overflow: hidden; }
body { font: 11px/14px "DejaVu Sans Condensed", "DejaVu Sans", sans-serif; font-stretch: condensed; color: #000; background: #e4e4e4; }
b { font-weight: normal; }
i, em { font-style: normal; }
.defs { position: absolute; }
.app { display: flex; flex-direction: column; width: 1297px; height: 867px; background: linear-gradient(90deg, #e2e2e2, #f2f2f2); border-top: 1px solid #161616; }

.menu { display: flex; align-items: center; height: 24px; padding-left: 3px; }
.menu span { white-space: nowrap; }
.menu u { text-underline-offset: 1px; }
.m1 { width: 32px; margin-left: 7px; } .m2 { width: 34px; } .m3 { width: 38px; } .m4 { width: 45px; } .m5 { width: 45px; } .m6 { width: 61px; } .m7 { width: 48px; } .m8 { width: 50px; } .m9 { width: 55px; }

.grip { flex: none; width: 7px; height: 15px; background: radial-gradient(circle at 2px 2px, #b4b4b4 1.2px, transparent 1.400px) 2px 0 / 4px 4px repeat-y; }
.row { display: flex; height: 25px; padding-left: 3px; margin-bottom: 1px; }
.group { display: flex; align-items: center; height: 24px; background: linear-gradient(#fafafa, #f0f0f0 50%, #dcdcdc); border-radius: 3px; }
.g2, .g3, .g2b { margin-left: 4px; }
.g3b { margin-left: 3px; }
.btn { flex: none; width: 22px; height: 22px; display: flex; align-items: center; justify-content: center; }
.btn.on { border: 1px solid #989898; background: #efefef; }
.btn.gray { color: #b0b0b0; }
.btn.blue { color: #2f6bd6; }
.btn.flip { color: #c4c4c4; transform: scaleX(-1); }
.btn.pale { color: #b5b5b5; }
.arr { flex: none; width: 11px; display: flex; justify-content: center; }
.arr.w16 { width: 15px; }
.sep { flex: none; width: 6px; height: 14px; background: linear-gradient(#c2c2c2, #c2c2c2) 2px 0 / 1px 100% no-repeat; }
.g2b .sep { width: 7px; }
.more { flex: none; width: 11px; height: 24px; margin-left: 1px; border-radius: 0 3px 3px 0; background: linear-gradient(#000, #000) 3px 16px / 5px 1px no-repeat, linear-gradient(#000, #000) 3px 18px / 5px 1px no-repeat, linear-gradient(#000, #000) 4px 19px / 3px 1px no-repeat, linear-gradient(#000, #000) 5px 20px / 1px 1px no-repeat, linear-gradient(#f0f0f0, #b2b2b2); }
.combo { flex: none; display: flex; align-items: center; height: 18px; margin-right: 3px; padding-left: 4px; background: #fff; }
.combo.first { margin-left: 1px; }
.combo .arr { margin-left: auto; height: 16px; align-items: center; background: #eee; }
.combo.off { height: 20px; border: 1px solid #b4b4b4; background: #e2e2e2; color: #7a7a7a; }
.combo.off .arr { background: none; color: #aaa; }
.combo .ci { margin-right: 5px; }
.c147 { width: 147px; } .c149 { width: 149px; } .combo.c149 { margin-right: 1px; } .c68 { width: 67px; margin-right: 2px; } .c47 { width: 47px; margin-left: 1px; } .combo.c79 { width: 79px; margin: 0 1px; padding-left: 3px; }

.main { display: flex; height: 769px; border-top: 1px solid #9c9c9c; }
.strip { display: flex; flex-direction: column; width: 46px; background: linear-gradient(90deg, #fafafa, #dedede); border-left: 1px solid #d0d0d0; }
.hot { position: relative; display: flex; flex-direction: column; width: 46px; height: 277px; margin: 3px 0 0 -1px; padding: 7px 0 0 5px; border: solid red; border-width: 4px 5px 5px 4px; border-radius: 3px; }
.hot svg { flex: none; }
.i1 { margin: 0 0 10px -2px; } .i2 { margin: 0 0 11px -1px; } .i3, .i4 { margin-left: -1px; } .i3 { margin-bottom: 11px; } .i4 { margin-bottom: 17px; }
.i5 { margin: 0 0 9px -5px; } .i6 { margin: 0 0 9px -1px; }
.hotbar { margin: 0 0 0 -4px; height: 11px; background: linear-gradient(90deg, #eee, #a8a8a8); display: flex; justify-content: flex-end; }
.hotbar i { width: 4px; height: 5px; margin: 3px 0; border: solid #000; border-width: 0 1px; }
.notch { position: absolute; right: 0; }
.n1 { top: 60px; } .n2 { top: 102px; }
.hgrip { flex: none; height: 3px; width: 36px; margin: 1px 0 1px 4px; background: linear-gradient(90deg, #bbb 50%, transparent 50%) 0 0 / 4px 2px repeat-x; }
.tools { display: flex; flex-direction: column; }
.tb { flex: none; width: 18px; height: 22px; margin-left: 13px; display: flex; align-items: center; justify-content: center; }
.white { color: #fff; } .mid { color: #888; }
.duo { display: flex; align-items: center; height: 22px; }
.duo .tb { margin-left: 8px; }
.duo.off .arr { color: #b5b5b5; }
.duo .arr { margin-left: 1px; }
.letter { font: bold 16px/20px "Liberation Serif", serif; color: #2457bd; }
.hsep { height: 1px; margin: 3px 6px 4px 5px; background: #bbb; }
.ang { margin-left: 8px; font-weight: bold; }
.endbar { flex: none; width: 45px; background: linear-gradient(90deg, #eee, #b0b0b0); margin-bottom: 5px; }
.one { height: 22px; margin-bottom: 2px; }
.dim { color: #bbb; margin-top: 3px; }
.sym { font-size: 17px; }
.txt { font-size: 13px; }
.last { margin: auto 0 0; }

.panels { display: flex; flex-direction: column; width: 274px; padding-bottom: 1px; background: #e2e2e2; }
.cap { display: flex; align-items: center; flex: none; height: 18px; padding: 0 4px 0 3px; color: #fff; }
.cap span { flex: 1; }
.cap.dark { background: linear-gradient(90deg, #454545, #727272); }
.cap.light { height: 19px; margin-top: 5px; background: linear-gradient(90deg, #717171, #c4c4c4); }
.k { margin-left: 8px; }
.ltools { display: flex; align-items: center; flex: none; height: 26px; padding: 0 0 2px 5px; background: linear-gradient(#fafafa, #e2e2e2); }
.sort { display: flex; gap: 4px; align-items: center; width: 22px; height: 22px; padding-left: 3px; border: 1px solid #989898; }
.sort em { display: block; font-size: 9px; line-height: 9px; color: #456; }
.sort .r { color: #b44; }
.listwrap { display: flex; flex: none; height: 452px; border: 1px solid #b4b4b4; border-width: 0 1px 1px; background: #fff; overflow: hidden; }
.list { width: 256px; }
.lrow { display: grid; grid-template-columns: 19px 115px 40px 20px 20px 20px 21px; height: 18px; align-items: center; color: #777; }
.lhead { height: 21px; background: linear-gradient(#fbfbfb, #ececec); color: #000; border-bottom: 1px solid #ccc; }
.lhead span { padding-left: 2px; border-left: 1px solid #bbb; height: 16px; }
.lhead span:first-child { border-left: 0; }
.lrow > * { overflow: hidden; white-space: nowrap; }
.lbody svg { display: block; margin-left: 2px; }
.nm { padding-left: 2px; letter-spacing: -.12px; }
.od { height: 18px; line-height: 18px; padding-right: 3px; text-align: right; background: #f3f3f3; }
.act { color: #000; }
.lbody .swatch { display: block; width: 13px; height: 12px; margin-left: 4px; border: 1px solid #555; background: linear-gradient(90deg, transparent 5px, #555 5px 6px, transparent 6px) var(--c); }
.sel { background: linear-gradient(90deg, #fff 19px, #bababa 19px); color: #fff; font-weight: bold; outline: 1px dotted #333; outline-offset: -1px; }
.sel .od { background: none; }
.vscroll { display: flex; flex-direction: column; width: 16px; background: #f1f1f1; }
.sb { display: flex; align-items: center; justify-content: center; width: 16px; height: 17px; border: 1px solid #aaa; background: linear-gradient(135deg, #fff, #cfcfcf); }
.sb.end { margin-top: auto; }
.thumb { display: flex; align-items: center; justify-content: center; height: 320px; border: 1px solid #a6a6a6; background: linear-gradient(90deg, #fff, #d4d4d4); }
.thumb i { width: 7px; height: 8px; background: repeating-linear-gradient(#aaa 0 1px, #fff 1px 2px); }
.props { flex: 1; background: #fff; border: 1px solid #b4b4b4; border-top: 0; overflow: hidden; }
.ptitle { display: flex; align-items: center; height: 17px; font-weight: bold; border-bottom: 1px solid #aaa; }
.minus { width: 11px; height: 11px; margin: 0 4px 0 1px; border: 1px solid #7488a8; background: linear-gradient(#235, #235) 2px 4px / 5px 1px no-repeat #e5edf8; }
.ptable { display: grid; grid-template-columns: 122px 1fr; grid-auto-rows: 17px; margin: 0 0 0 13px; border-left: 1px solid #aaa; }
.ptable dt, .ptable dd { margin: 0; padding: 0 0 0 2px; line-height: 16px; border-bottom: 1px solid #ddd; white-space: nowrap; }
.ptable dt { letter-spacing: -.05px; }
.ptable dd { border-left: 1px solid #ddd; color: #6c6c6c; letter-spacing: -.25px; }
.props::after { content: ""; display: block; border-top: 1px solid #aaa; margin-top: -1px; }

.view { flex: 1; display: flex; flex-direction: column; margin-left: 4px; border-left: 2px solid #8e8e8e; min-width: 0; background: #000; }
.pcb { display: block; flex: none; }
.hscroll { display: flex; height: 18px; background: #f0f0f0; border-top: 1px solid #bbb; }
.hscroll .sb { width: 17px; height: 17px; }
.hthumb { flex: 1; display: flex; align-items: center; border: 1px solid #aaa; border-right: 0; background: linear-gradient(#fff, #d8d8d8); padding-left: 636px; }
.hthumb i { width: 8px; height: 7px; background: repeating-linear-gradient(90deg, #aaa 0 1px, #fff 1px 2px); }
.status { height: 21px; padding: 5px 2px 0; background: #e2e2e2; }
```
FILE: app.js
```js
const icon = (id, w, h) => `<svg width="${w}" height="${h}"><use href="#${id}"/></svg>`;
const wide = ['sline', 'spoly', 'sdot', 'srect', 'sstar', 'sdiam', 'seq', 'splus', 'sminus', 'mir1'];

document.querySelectorAll('[data-i]').forEach(el => {
  const id = el.dataset.i;
  if (id === 'v9') el.innerHTML = icon(id, 14, 14);
  else if (id === 'export') el.innerHTML = icon(id, 18, 18);
  else el.innerHTML = icon(id, wide.includes(id) ? 18 : 16, id === 'v6' ? 18 : 16);
});
document.querySelectorAll('.arr').forEach(el => { el.innerHTML = icon('arrow', 5, 3); });

const layers = [
  ['Fiducial', '#fff', 2], ['DrillPlated', '#0ff', 2, 1], ['DrillUnplated', '#00c0c0', 2], ['BoardOutline', '#ff0', 2, 1],
  ['TopLayer', '#f00', 2, 1], ['InsulateTop__Std', '#00c000', 1], ['InsulateTop__Small', '#0ff', 1], ['InsulateTop__Big', '#00c0c0', 1],
  ['InsulateTop__Bigger', '#a0a0a0', 1], ['BottomLayer', '#0f0', 2, 1], ['InsulateBottom__Std', '#c00000', 1], ['InsulateBottom__Small', '#f0f', 1],
  ['InsulateBottom__Big', '#c000c0', 1], ['InsulateBottom__Big...', '#a0a0a0', 2], ['TextTop', '#f0f', 2], ['TextBottom', '#0ff', 2],
  ['CuttingOutside', '#c0c000', 2, 1], ['CuttingInside', '#a0a0a0', 2], ['SolderMaskTop', '#c00000', 2], ['SolderMaskBottom', '#00c000', 2],
  ['SilkScreenTop', '#ff0', 2], ['SilkScreenBottom', '#c0c000', 2], ['RuboutTop', '#c000c0', 2], ['RuboutBottom', '#00c0c0', 2]
];
document.getElementById('rows').innerHTML = layers.map(([name, color, bone, active], i) =>
  `<div class="lrow${i === 0 ? ' sel' : ''}${active ? ' act' : ''}">${icon('tick', 14, 14)}<span class="nm">${name}</span><span class="od">${i + 1}</span>` +
  `${icon('dash', 12, 10)}${icon('bone' + bone, 16, 14)}${icon(i > 21 ? 'layo' : 'lay', 15, 14)}<i class="swatch" style="--c:${color}"></i></div>`).join('');

// Pads: x, y, ring radius, hole radius, clearance radius, square flag
const pads = [];
const ys = [316, 345, 374, 403, 431.5, 460.5, 489, 518, 546.5, 575.5, 604, 633, 662.5, 690.5, 719];
ys.forEach((y, i) => {
  pads.push([870.5, y, 10, 6, 19, i === 0]);
  pads.push([1129.5, y, 10, 6, 18.5]);
});
[931, 960, 988.7, 1017.5, 1046.5, 1075].forEach((x, i) => pads.push([x, 200, 11.5, 7, 20.5, i === 0]));
[[956.5, 303], [952.5, 422.5], [952.5, 569.5], [952.5, 717.5]].forEach(([x, y]) => pads.push([x, y, 10.5, 6, 0, true]));
[[956.5, 331], [952.5, 451], [952.5, 480], [952.5, 598], [952.5, 627.5], [952.5, 745.5], [952.5, 774.5],
 [1043.5, 303.5], [1043.5, 331.5], [1047.5, 422.5], [1047.5, 451], [1047.5, 480], [1047.5, 569.5], [1047.5, 598],
 [1047.5, 627.5], [1047.5, 717.5], [1047.5, 745.5], [1047.5, 774.5]].forEach(([x, y]) => pads.push([x, y, 10, 6, 18.5]));
[[873.5, 194.5], [896.5, 531.5], [896.5, 647.5], [915.5, 750.5], [997.3, 240.5], [1009.5, 260.5], [1021.5, 281.5], [973.5, 399.5],
 [973.5, 547.5], [1015.5, 502.5], [1104.5, 518.5], [1067.5, 352.5], [1106.5, 345.5], [1071.5, 391.5], [1106.5, 374.5],
 [1049.5, 675.5], [1095.5, 675.5]].forEach(([x, y]) => pads.push([x, y, 9, 5, 17.5]));
[[883.5, 152.5], [1116.5, 152.5], [883.5, 770.5], [1116.5, 770.5]].forEach(([x, y]) => pads.push([x, y, 19.8, 18.7, 28.5]));

const circle = (x, y, r, fill) => `<circle cx="${x}" cy="${y}" r="${r}" fill="${fill}"/>`;
document.getElementById('halos').innerHTML = pads.map(p => circle(p[0], p[1], p[4], '#000')).join('');
document.getElementById('pads').innerHTML = pads.map(([x, y, r, h, , sq]) =>
  (sq ? `<rect x="${x - r}" y="${y - r}" width="${2 * r}" height="${2 * r}" fill="red"/>` : circle(x, y, r, 'red')) + circle(x, y, h, '#0ff')).join('');
```
